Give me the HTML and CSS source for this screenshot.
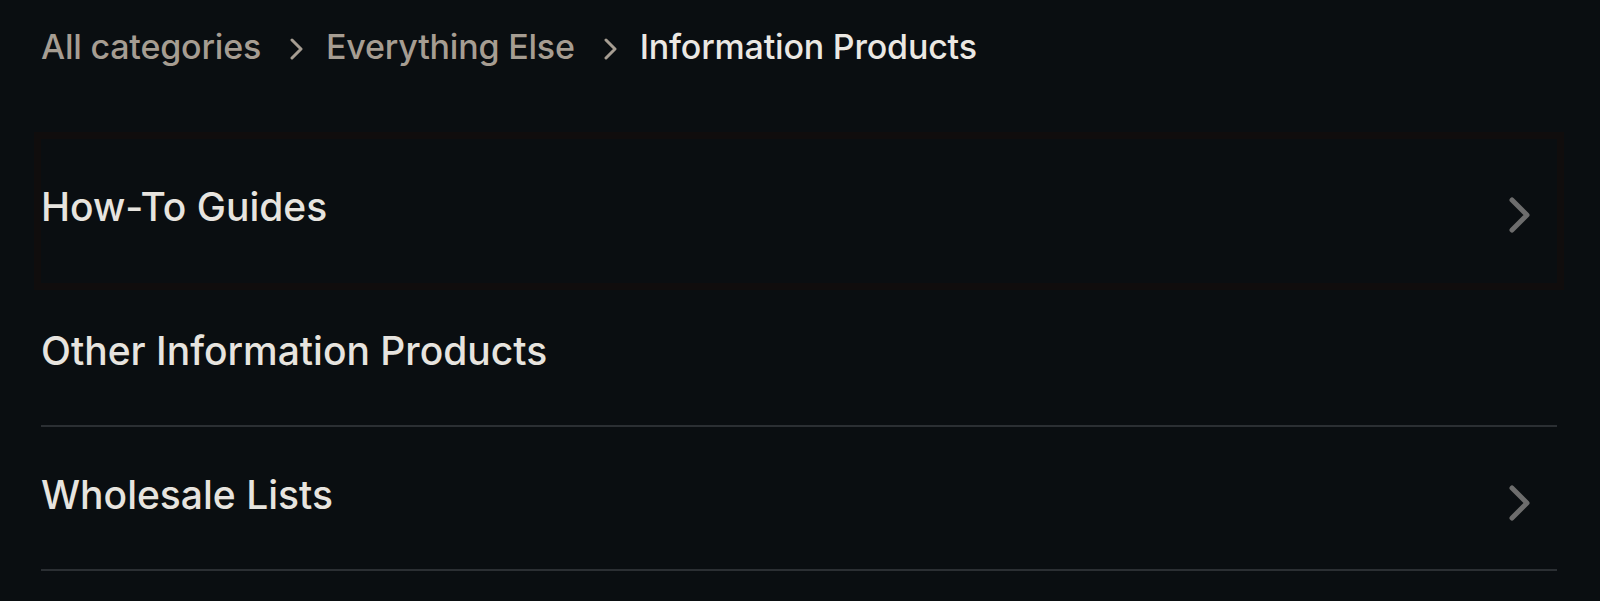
FILE: index.html
```html
<!DOCTYPE html>
<html lang="en">
<head>
<meta charset="utf-8">
<title>Information Products</title>
<link rel="stylesheet" href="styles.css">
</head>
<body>
<div class="page">
  <nav class="crumbs">
    <a class="crumb" href="#">All categories</a>
    <svg class="sep" viewBox="0 0 14 24" width="14" height="24"><path d="M3 3 L12 12 L3 21" /></svg>
    <a class="crumb" href="#">Everything Else</a>
    <svg class="sep" viewBox="0 0 14 24" width="14" height="24"><path d="M3 3 L12 12 L3 21" /></svg>
    <span class="crumb current">Information Products</span>
  </nav>
  <ul class="list">
    <li class="row focused">
      <span class="label">How-To Guides</span>
      <svg class="chev" viewBox="0 0 26 40" width="26" height="40"><path d="M4 5 L19 20 L4 35" /></svg>
    </li>
    <li class="row">
      <span class="label">Other Information Products</span>
    </li>
    <li class="row">
      <span class="label">Wholesale Lists</span>
      <svg class="chev" viewBox="0 0 26 40" width="26" height="40"><path d="M4 5 L19 20 L4 35" /></svg>
    </li>
  </ul>
</div>
</body>
</html>
```
FILE: styles.css
```css
html, body {
  margin: 0;
  padding: 0;
  background: #0a0e11;
}
body {
  font-family: Inter, "Noto Sans", "Liberation Sans", sans-serif;
  color: #e8e5e0;
}
.page {
  padding: 27px 43px 0 41px;
}
.crumbs {
  display: flex;
  align-items: center;
  height: 40px;
}
.crumb {
  font-size: 34px;
  font-weight: 500;
  line-height: 40px;
  color: #a69d92;
  text-decoration: none;
  letter-spacing: -0.2px;
}
.crumb.current {
  color: #ebe8e3;
}
.sep {
  display: block;
  margin: 4px 23px 0 28px;
}
.sep path {
  fill: none;
  stroke: #a69d92;
  stroke-width: 3;
  stroke-linecap: round;
  stroke-linejoin: round;
}
.list {
  list-style: none;
  margin: 72px 0 0 0;
  padding: 0;
}
.row {
  display: flex;
  align-items: center;
  justify-content: space-between;
  height: 142px;
  border-bottom: 2px solid #2b2f33;
}
.row.focused {
  border-bottom-color: transparent;
  box-shadow: 0 0 0 7px #100d0d;
}
.label {
  font-size: 39px;
  font-weight: 500;
  letter-spacing: 0;
  line-height: 48px;
  padding-bottom: 6px;
  color: #e7e4df;
}
.chev {
  display: block;
  margin-right: 23px;
  margin-top: 10px;
}
.chev path {
  fill: none;
  stroke: #6d6d6d;
  stroke-width: 5;
  stroke-linecap: round;
  stroke-linejoin: round;
}
```
